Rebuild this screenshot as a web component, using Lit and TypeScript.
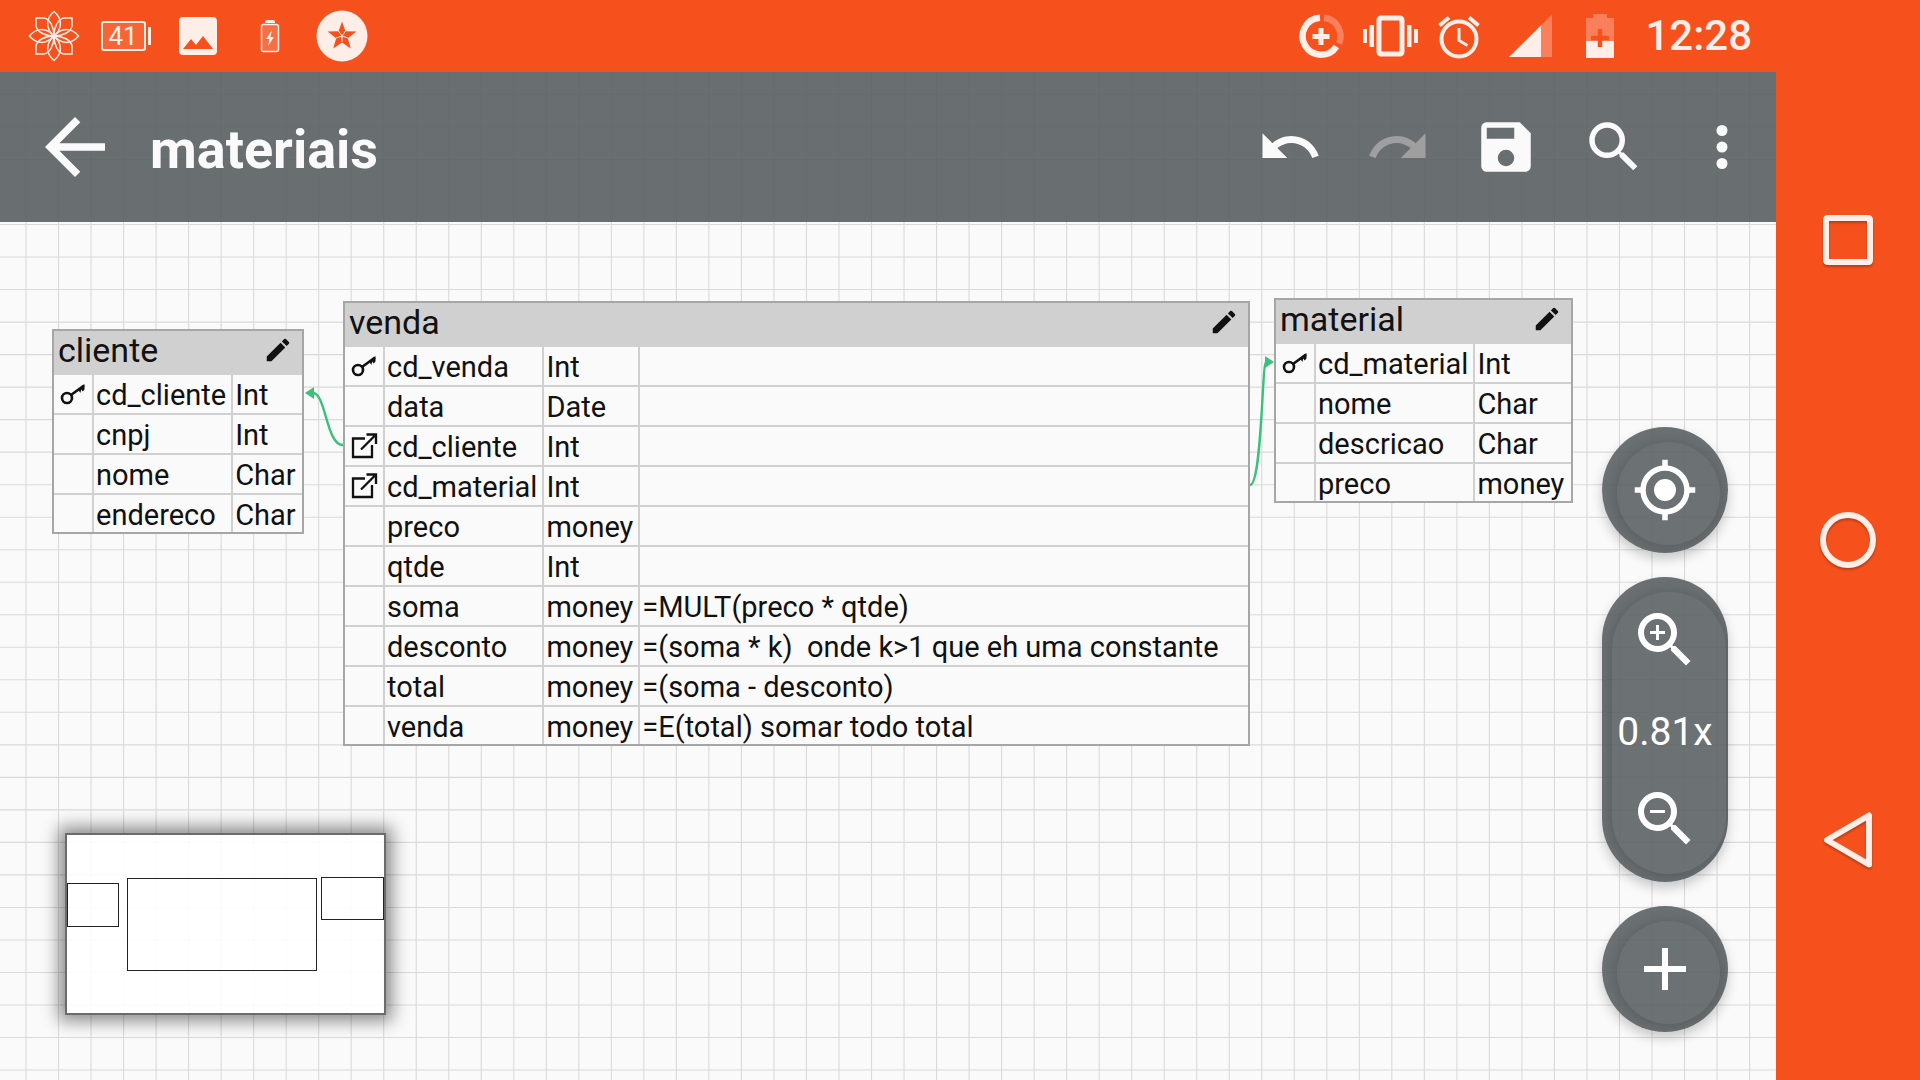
import { LitElement, html, css, svg, nothing } from "lit";
import { customElement, property } from "lit/decorators.js";

type Field = { icon?: "key" | "link"; name: string; type: string; note?: string };
type Entity = { name: string; fields: Field[] };

const CLIENTE: Entity = {
  name: "cliente",
  fields: [
    { icon: "key", name: "cd_cliente", type: "Int" },
    { name: "cnpj", type: "Int" },
    { name: "nome", type: "Char" },
    { name: "endereco", type: "Char" },
  ],
};

const VENDA: Entity = {
  name: "venda",
  fields: [
    { icon: "key", name: "cd_venda", type: "Int", note: "" },
    { name: "data", type: "Date", note: "" },
    { icon: "link", name: "cd_cliente", type: "Int", note: "" },
    { icon: "link", name: "cd_material", type: "Int", note: "" },
    { name: "preco", type: "money", note: "" },
    { name: "qtde", type: "Int", note: "" },
    { name: "soma", type: "money", note: "=MULT(preco * qtde)" },
    { name: "desconto", type: "money", note: "=(soma * k)  onde k>1 que eh uma constante" },
    { name: "total", type: "money", note: "=(soma - desconto)" },
    { name: "venda", type: "money", note: "=E(total) somar todo total" },
  ],
};

const MATERIAL: Entity = {
  name: "material",
  fields: [
    { icon: "key", name: "cd_material", type: "Int" },
    { name: "nome", type: "Char" },
    { name: "descricao", type: "Char" },
    { name: "preco", type: "money" },
  ],
};

const KEY_ICON = html`<svg class="mark" viewBox="0 0 28 28" role="img" aria-label="Primary key">
  <circle cx="8" cy="18" r="5" fill="none" stroke="currentColor" stroke-width="2.600" />
  <path d="M12 15L25 5.500" fill="none" stroke="currentColor" stroke-width="2.600" />
  <path d="M25.500 4v5.500l-1.800 2-1.500-2-.8 3.500-2.400-3.500z" fill="currentColor" />
</svg>`;

const LINK_ICON = html`<svg class="mark" viewBox="0 0 28 28" role="img" aria-label="Foreign key">
  <path d="M15 6.500H3v18.500H22V13M16.500 2.500H26V12M25.500 3L11 17.500" fill="none" stroke="currentColor" stroke-width="2.300" />
</svg>`;

@customElement("entity-table")
class EntityTable extends LitElement {
  @property({ attribute: false }) entity!: Entity;

  static styles = css`
    :host {
      display: block;
      box-sizing: border-box;
      border: 2px solid #a6a6a6;
      background: #fafafa;
      color: #111;
      font-family: Roboto, "Liberation Sans", sans-serif;
    }
    .head {
      display: flex;
      align-items: center;
      justify-content: space-between;
      box-sizing: border-box;
      height: 44px;
      padding: 0 9px 6px 4px;
      background: #d0d0d0;
    }
    .name {
      margin: 0;
      font-size: 34px;
      line-height: 38px;
      font-weight: 400;
    }
    .edit {
      display: block;
      width: 30px;
      height: 30px;
      padding: 0;
      border: 0;
      background: none;
      color: inherit;
    }
    .edit svg {
      display: block;
      width: 30px;
      height: 30px;
    }
    .fields {
      width: 100%;
      border-collapse: separate;
      border-spacing: 0;
    }
    .fields td {
      box-sizing: border-box;
      height: 40px;
      padding: 2px 5px 0 2px;
      border-bottom: 2px solid #d0d0d0;
      border-right: 2px solid #d0d0d0;
      font-size: 29px;
      line-height: 34px;
      white-space: pre;
    }
    .fields td:last-child {
      width: 100%;
      border-right: 0;
    }
    .fields tr:last-child td {
      border-bottom: 0;
      height: 37px;
    }
    .fields .flag {
      padding: 0 5px;
    }
    .slot {
      display: flex;
      width: 28px;
      height: 28px;
    }
    .mark {
      width: 28px;
      height: 28px;
    }
  `;

  render() {
    const { name, fields } = this.entity;
    return html`
      <div class="head">
        <h2 class="name">${name}</h2>
        <button class="edit" aria-label="Edit ${name}">
          <svg viewBox="0 0 24 24" fill="currentColor">
            <path d="M3 17.250V21h3.750L17.810 9.940l-3.750-3.750L3 17.250zM20.710 7.040a1 1 0 0 0 0-1.410l-2.340-2.340a1 1 0 0 0-1.410 0l-1.830 1.830 3.750 3.750 1.830-1.830z" />
          </svg>
        </button>
      </div>
      <table class="fields">
        <tbody>
          ${fields.map(
            (f) => html`<tr>
              <td class="flag"><span class="slot">${f.icon === "key" ? KEY_ICON : f.icon === "link" ? LINK_ICON : nothing}</span></td>
              <td>${f.name}</td>
              <td>${f.type}</td>
              ${f.note === undefined ? nothing : html`<td>${f.note}</td>`}
            </tr>`
          )}
        </tbody>
      </table>
    `;
  }
}

/* Grid of the drawing canvas: 25 cells span 813 units. */
const CELL = 813 / 25;
const gridPath = (() => {
  let d = "";
  for (let i = 0; i < 130; i++) {
    d += `M${(26 + i * CELL).toFixed(2)} 0V4000`;
    d += `M0 ${(29.4 + i * CELL).toFixed(2)}H4000`;
  }
  return d;
})();

@customElement("app-root")
class AppRoot extends LitElement {
  static styles = css`
    :host {
      display: flex;
      height: 100vh;
      overflow: hidden;
      background: #fafafa;
      color: #fff;
      font-family: Roboto, "Liberation Sans", sans-serif;
    }
    button {
      display: flex;
      align-items: center;
      justify-content: center;
      padding: 0;
      border: 0;
      background: none;
      color: inherit;
      font: inherit;
    }
    svg {
      display: block;
      flex: none;
    }
    .screen {
      flex: 1;
      min-width: 0;
      display: flex;
      flex-direction: column;
      position: relative;
    }
    .grid {
      position: absolute;
      inset: 0;
      width: 100%;
      height: 100%;
    }
    .status {
      position: relative;
      display: flex;
      align-items: center;
      height: 72px;
      padding: 0 24px 0 18px;
      background: #f6511d;
      color: #ffede8;
    }
    .notices,
    .system {
      display: flex;
      align-items: center;
    }
    .status svg {
      width: 72px;
      height: 72px;
    }
    .system {
      margin-left: auto;
    }
    .system svg {
      width: 70px;
    }
    .clock {
      margin-left: 9px;
      font-size: 42px;
      line-height: 48px;
      font-weight: 500;
    }
    .toolbar {
      position: relative;
      display: flex;
      align-items: center;
      height: 150px;
      padding-left: 21px;
      background: rgba(92, 98, 101, 0.92);
      color: #fafafa;
    }
    .toolbar button {
      width: 108px;
      height: 108px;
    }
    .toolbar svg {
      width: 66px;
      height: 66px;
    }
    .toolbar .back svg {
      width: 90px;
      height: 90px;
    }
    .toolbar button:disabled {
      color: #9f9f9f;
    }
    .title {
      flex: 1;
      margin: 0;
      padding: 6px 0 0 21px;
      font-size: 54px;
      line-height: 64px;
      font-weight: 700;
    }
    .canvas {
      position: relative;
      flex: 1;
      min-height: 0;
    }
    .links {
      position: absolute;
      left: 0;
      top: 0;
      width: 100%;
      height: 100%;
    }
    .node {
      position: absolute;
    }
    .cliente {
      left: 52px;
      top: 107px;
      width: 252px;
    }
    .venda {
      left: 343px;
      top: 79px;
      width: 907px;
    }
    .material {
      left: 1274px;
      top: 76px;
      width: 299px;
    }
    .minimap {
      position: absolute;
      left: 65px;
      bottom: 65px;
      box-sizing: border-box;
      width: 321px;
      height: 182px;
      border: 2px solid #6b6b6b;
      background: rgba(255, 255, 255, 0.9);
      box-shadow: 0 0 16px 6px rgba(0, 0, 0, 0.45);
    }
    .controls {
      position: absolute;
      right: 48px;
      bottom: 48px;
      display: flex;
      flex-direction: column;
      gap: 24px;
    }
    .fab {
      position: relative;
      overflow: hidden;
      width: 126px;
      height: 126px;
      border-radius: 63px;
      background: rgba(92, 98, 101, 0.9);
    }
    .lift {
      border-radius: 63px;
      box-shadow: 0 6px 12px rgba(0, 0, 0, 0.2);
    }
    .fab::before {
      content: "";
      position: absolute;
      inset: 15px 8px 8px 15px;
      border-radius: 52px;
      box-shadow: 0 2px 18px rgba(0, 0, 0, 0.22);
    }
    .zoom {
      display: flex;
      flex-direction: column;
      align-items: center;
      justify-content: space-between;
      box-sizing: border-box;
      height: 305px;
      padding: 27px 0;
    }
    .zoom::before {
      inset: 15px 2px 8px 10px;
      border-radius: 57px;
    }
    .fab svg,
    .zoom button {
      width: 72px;
      height: 72px;
    }
    .fab .aim {
      width: 66px;
      height: 66px;
    }
    .scale {
      padding-top: 4px;
      font-size: 39px;
      line-height: 40px;
    }
    .nav {
      position: relative;
      display: flex;
      flex-direction: column;
      align-items: center;
      justify-content: center;
      gap: 156px;
      width: 144px;
      background: #f6511d;
    }
    .nav button,
    .nav svg {
      width: 144px;
      height: 144px;
    }
    .nav svg {
      filter: drop-shadow(0 2px 1px rgba(0, 0, 0, 0.25));
    }
  `;

  render() {
    return html`
      <main class="screen">
        <svg class="grid" aria-hidden="true">
          <path d=${gridPath} fill="none" stroke="#dadada" stroke-width="1.100" />
        </svg>
        ${this.statusBar()} ${this.toolbar()}
        <section class="canvas">
          <svg class="links" aria-hidden="true" fill="none" stroke="#3cc07c" stroke-width="2.400">
            <path d="M343 223C326 223 326 171 313 171" />
            <path d="M305 171l9-6v12z" fill="#3cc07c" stroke="none" />
            <path d="M1250 263C1262 263 1262 140 1266 140" />
            <path d="M1274 140l-9-6v12z" fill="#3cc07c" stroke="none" />
          </svg>
          <entity-table class="node cliente" .entity=${CLIENTE}></entity-table>
          <entity-table class="node venda" .entity=${VENDA}></entity-table>
          <entity-table class="node material" .entity=${MATERIAL}></entity-table>
          <div class="minimap">
            <svg viewBox="0 0 317 178" fill="none" stroke="#222" stroke-width="1">
              <rect x="0.500" y="48.500" width="51" height="43" />
              <rect x="60.500" y="43.500" width="189" height="92" />
              <rect x="254.500" y="42.500" width="62" height="42" />
            </svg>
          </div>
          ${this.controls()}
        </section>
      </main>
      ${this.navBar()}
    `;
  }

  private statusBar() {
    return html`<header class="status">
      <div class="notices">
        <svg viewBox="0 0 72 72" fill="none" stroke="currentColor" stroke-width="1.500">
          ${[0, 90, 180, 270].map(
            (a) => svg`<g transform="rotate(${a} 36 36)">
              <path d="M36 36C27 28 28 18 36 11.500C44 18 45 28 36 36Z" />
              <path d="M36 36C36 27 40 19 46 18H54V26C53 32 45 36 36 36Z" />
            </g>`
          )}
          <circle cx="36" cy="36" r="2" fill="currentColor" stroke="none" />
        </svg>
        <svg viewBox="0 0 72 72">
          <rect x="12" y="22" width="43" height="28" rx="2" fill="currentColor" fill-opacity=".12" stroke="currentColor" stroke-width="2" />
          <path d="M58 27h3v18h-3z" fill="currentColor" />
          <text x="33" y="45" text-anchor="middle" font-size="26" fill="currentColor">41</text>
        </svg>
        <svg viewBox="0 0 72 72">
          <rect x="17" y="17" width="38" height="38" rx="4" fill="currentColor" />
          <path d="M21 49l8-10 5 6 7-9 10 13z" fill="#f6511d" />
        </svg>
        <svg viewBox="0 0 72 72">
          <rect x="27.500" y="24.500" width="17" height="27" rx="2" fill="currentColor" fill-opacity=".2" stroke="currentColor" stroke-width="1.500" />
          <path d="M31 22q0-2 2-2h6q2 0 2 2v1H31zM38 30l-6 9h3.500l-1.500 7 6-9h-3.500z" fill="currentColor" />
        </svg>
        <svg viewBox="0 0 72 72">
          <circle cx="36" cy="36" r="25.500" fill="currentColor" />
          <path d="M36 21.500l3.500 9.800 10.900.3-8.600 6.600 3 10.300-8.800-6-8.800 6 3-10.300-8.600-6.600 10.900-.3z" fill="#f6511d" />
          <path d="M36 36v6M36 36l-6 2M36 36l6 2M36 36l-3.500-5M36 36l3.500-5" stroke="#ffede8" stroke-width="1" />
        </svg>
      </div>
      <div class="system">
        <svg viewBox="0 0 70 72" fill="none" stroke="currentColor" stroke-width="6.500">
          <path d="M34 17.800A18.500 18.500 0 1 0 50.500 46.500" />
          <path d="M38 17.800A18.500 18.500 0 0 1 53 43.500" opacity=".3" />
          <path d="M35 28v17M26.500 36.500h17" stroke-width="5" />
        </svg>
        <svg viewBox="0 0 70 72">
          <rect x="23" y="18" width="23" height="36" rx="2" fill="none" stroke="currentColor" stroke-width="5" />
          <path d="M7 29h4v14H7zM13.500 25h4.500v22h-4.500zM51 25h4.500v22H51zM58 29h4v14h-4z" fill="currentColor" />
        </svg>
        <svg viewBox="0 0 70 72" fill="none" stroke="currentColor">
          <circle cx="33" cy="39" r="17.500" stroke-width="4" />
          <path d="M33 28v12.500l8.500 5" stroke-width="3" />
          <path d="M13.500 25.500l9.500-8M52.500 25.500l-9.500-8" stroke-width="4" />
        </svg>
        <svg viewBox="0 0 70 72" fill="currentColor">
          <path d="M56 14.500V57H13z" opacity=".3" />
          <path d="M45 25.500V57H13z" />
        </svg>
        <svg viewBox="0 0 70 72">
          <path d="M27 14h14v4h7v40H20V18h7z" fill="currentColor" opacity=".3" />
          <path d="M20 41h28v17H20z" fill="currentColor" />
          <path d="M34 29v18M25 38h18" stroke="#f6511d" stroke-width="4.500" />
        </svg>
        <time class="clock">12:28</time>
      </div>
    </header>`;
  }

  private toolbar() {
    return html`<nav class="toolbar">
      <button class="back" aria-label="Back">
        <svg viewBox="0 0 24 24" fill="currentColor"><path d="M20 11H7.830l5.590-5.590L12 4l-8 8 8 8 1.410-1.410L7.830 13H20v-2z" /></svg>
      </button>
      <h1 class="title">materiais</h1>
      <button aria-label="Undo">
        <svg viewBox="0 0 24 24" fill="currentColor"><path d="M12.500 8c-2.650 0-5.050.99-6.900 2.600L2 7v9h9l-3.620-3.620c1.390-1.160 3.160-1.880 5.120-1.880 3.540 0 6.550 2.310 7.600 5.500l2.370-.78C21.080 11.030 17.150 8 12.500 8z" /></svg>
      </button>
      <button aria-label="Redo" disabled>
        <svg viewBox="0 0 24 24" fill="currentColor"><path d="M18.400 10.600C16.550 8.990 14.150 8 11.500 8c-4.650 0-8.580 3.030-9.960 7.220L3.900 16c1.050-3.190 4.050-5.500 7.600-5.500 1.950 0 3.730.72 5.120 1.880L13 16h9V7l-3.600 3.600z" /></svg>
      </button>
      <button aria-label="Save">
        <svg viewBox="0 0 24 24" fill="currentColor"><path d="M17 3H5a2 2 0 0 0-2 2v14a2 2 0 0 0 2 2h14c1.100 0 2-.9 2-2V7l-4-4zm-5 16a3 3 0 1 1 0-6 3 3 0 0 1 0 6zm3-10H5V5h10v4z" /></svg>
      </button>
      <button aria-label="Search">
        <svg viewBox="0 0 24 24" fill="currentColor"><path d="M15.500 14h-.79l-.28-.27A6.470 6.470 0 0 0 16 9.500 6.500 6.500 0 1 0 9.500 16c1.610 0 3.090-.59 4.230-1.570l.27.28v.79l5 4.990L20.490 19l-4.990-5zm-6 0a4.500 4.500 0 1 1 0-9 4.500 4.500 0 0 1 0 9z" /></svg>
      </button>
      <button aria-label="More options">
        <svg viewBox="0 0 24 24" fill="currentColor"><circle cx="12" cy="6" r="2" /><circle cx="12" cy="12" r="2" /><circle cx="12" cy="18" r="2" /></svg>
      </button>
    </nav>`;
  }

  private magnifier(sign: string) {
    return html`<svg viewBox="0 0 24 24" fill="currentColor">
      <path d="M15.500 14h-.79l-.28-.27A6.470 6.470 0 0 0 16 9.500 6.500 6.500 0 1 0 9.500 16c1.610 0 3.090-.59 4.230-1.570l.27.28v.79l5 4.990L20.490 19l-4.990-5zm-6 0a4.500 4.500 0 1 1 0-9 4.500 4.500 0 0 1 0 9z" />
      <path d=${sign} />
    </svg>`;
  }

  private controls() {
    return html`<div class="controls">
      <div class="lift">
        <button class="fab" aria-label="Centre diagram">
          <svg class="aim" viewBox="0 0 24 24" fill="currentColor"><path d="M12 8a4 4 0 1 0 0 8 4 4 0 0 0 0-8zm8.940 3A8.994 8.994 0 0 0 13 3.060V1h-2v2.060A8.994 8.994 0 0 0 3.060 11H1v2h2.060A8.994 8.994 0 0 0 11 20.940V23h2v-2.060A8.994 8.994 0 0 0 20.940 13H23v-2h-2.060zM12 19a7 7 0 1 1 0-14 7 7 0 0 1 0 14z" /></svg>
        </button>
      </div>
      <div class="lift">
        <div class="fab zoom">
          <button aria-label="Zoom in">${this.magnifier("M12 10h-2v2H9v-2H7V9h2V7h1v2h2v1z")}</button>
          <span class="scale">0.81x</span>
          <button aria-label="Zoom out">${this.magnifier("M7 9h5v1H7z")}</button>
        </div>
      </div>
      <div class="lift">
        <button class="fab" aria-label="Add">
          <svg viewBox="0 0 24 24" fill="currentColor"><path d="M19 13h-6v6h-2v-6H5v-2h6V5h2v6h6v2z" /></svg>
        </button>
      </div>
    </div>`;
  }

  private navBar() {
    return html`<nav class="nav">
      <button aria-label="Recent apps">
        <svg viewBox="0 0 144 144" fill="none" stroke="#ffede8" stroke-width="6"><rect x="50" y="50" width="44" height="44" rx="1.500" /></svg>
      </button>
      <button aria-label="Home">
        <svg viewBox="0 0 144 144" fill="none" stroke="#ffede8" stroke-width="6"><circle cx="72" cy="72" r="25" /></svg>
      </button>
      <button aria-label="Back">
        <svg viewBox="0 0 144 144" fill="none" stroke="#ffede8" stroke-width="6" stroke-linejoin="round"><path d="M93 47.500v49L51 72z" /></svg>
      </button>
    </nav>`;
  }
}
